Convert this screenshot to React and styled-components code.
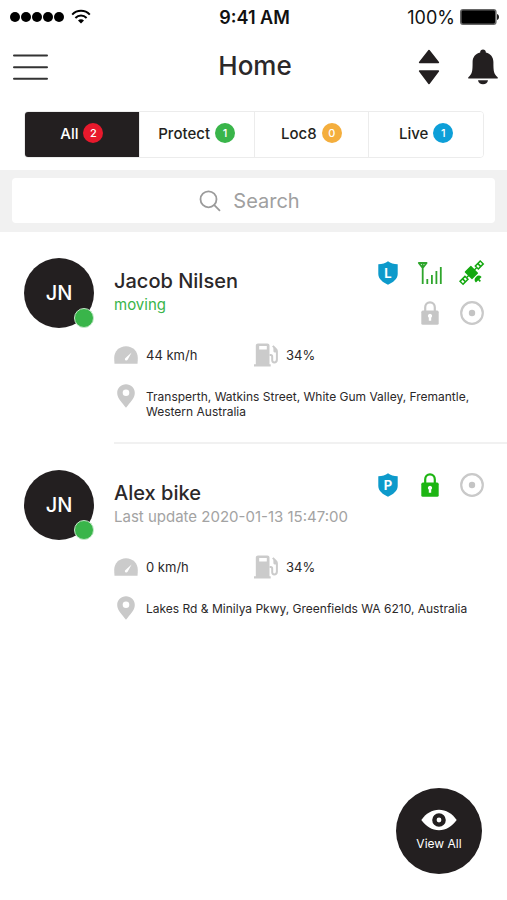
import React, { useState } from "react";
import styled, { createGlobalStyle } from "styled-components";

const tabs = [
    { id: "all", label: "All", count: 2, color: "#e8192c" },
    { id: "protect", label: "Protect", count: 1, color: "#39b54a" },
    { id: "loc8", label: "Loc8", count: 0, color: "#f4ae3d" },
    { id: "live", label: "Live", count: 1, color: "#0d9fd8" },
];

const devices = [
    {
        name: "Jacob Nilsen",
        initials: "JN",
        status: "moving",
        moving: true,
        plan: "L",
        tracking: true,
        locked: false,
        speed: "44 km/h",
        fuel: "34%",
        address: "Transperth, Watkins Street, White Gum Valley, Fremantle, Western Australia",
    },
    {
        name: "Alex bike",
        initials: "JN",
        status: "Last update 2020-01-13 15:47:00",
        moving: false,
        plan: "P",
        tracking: false,
        locked: true,
        speed: "0 km/h",
        fuel: "34%",
        address: "Lakes Rd & Minilya Pkwy, Greenfields WA 6210, Australia",
    },
];

const WifiIcon = () => (
    <svg width="20" height="16" viewBox="0 0 20 16" fill="none" stroke="#000" strokeWidth="2" aria-hidden="true">
        <path d="M1.2 5.6C6 .6 14 .6 18.8 5.6" />
        <path d="M4.4 9C7.6 5.8 12.4 5.8 15.6 9" />
        <path d="M7 11.6c1.7-1.7 4.3-1.7 6 0l-3 3z" fill="#000" stroke="none" />
    </svg>
);

const BatteryIcon = () => (
    <svg width="39" height="16" viewBox="0 0 39 16" aria-hidden="true">
        <rect x=".8" y=".8" width="35" height="14.400" rx="2.2" fill="#000" stroke="#666" strokeWidth="1.600" />
        <path d="M37 5c1.500.5 2 1.600 2 3s-.5 2.500-2 3z" fill="#222" />
    </svg>
);

const MenuIcon = () => (
    <svg width="36" height="28" viewBox="0 0 36 28" stroke="#333" strokeWidth="2" strokeLinecap="round" aria-hidden="true">
        <path d="M2 2.500h33M2 14.200h33M2 25.800h33" />
    </svg>
);

const SortIcon = () => (
    <svg width="22" height="36" viewBox="0 0 22 36" fill="#231f20" stroke="#231f20" strokeWidth="1.500" strokeLinejoin="round" aria-hidden="true">
        <path d="M11 1.500 20.400 13.500H1.600zM11 34.500 20.400 22H1.600z" />
    </svg>
);

const BellIcon = () => (
    <svg width="30" height="36" viewBox="0 0 30 36" fill="#231f20" aria-hidden="true">
        <path d="M15 .4c-1.600 0-2.800 1.100-2.800 2.600v.6C7.500 4.700 4.600 8.300 4.600 13c0 9.500-.5 12-4.200 15.200-.5.5-.3 1.300.4 1.300h28.400c.7 0 .9-.8.4-1.300C25.900 25 25.400 22.500 25.400 13c0-4.700-2.900-8.300-7.600-9.400V3C17.800 1.500 16.600.4 15 .4z" />
        <path d="M10 31.200h10c-.4 2.400-2.300 4-5 4s-4.600-1.600-5-4z" />
    </svg>
);

const SearchIcon = () => (
    <svg width="22" height="22" viewBox="0 0 22 22" fill="none" stroke="#9b9b9b" strokeWidth="1.800" strokeLinecap="round" aria-hidden="true">
        <circle cx="9.500" cy="9.300" r="8" />
        <path d="m15.300 15.200 5.200 5.200" />
    </svg>
);

const ShieldIcon = () => (
    <svg width="20" height="24" viewBox="0 0 20 24" fill="#0d9acb" aria-hidden="true">
        <path d="M10 .3C7.600 2.300 4.200 3.200.3 3.300V13c0 4.800 4.700 8.600 9.700 10.700 5-2.100 9.700-5.900 9.700-10.700V3.300C15.800 3.200 12.400 2.300 10 .3z" />
    </svg>
);

const SignalIcon = () => (
    <svg width="24" height="24" viewBox="0 0 24 24" fill="none" stroke="#2ea52c" strokeWidth="1.800" aria-hidden="true">
        <path d="M4.700 23V2M.8 2h7.800L4.700 7z" strokeLinejoin="round" />
        <path d="M9.300 23v-5M13.900 23v-9M18.400 23V10M22.800 23V6" />
    </svg>
);

const SatelliteIcon = () => (
    <svg width="24" height="24" viewBox="0 0 24 24" fill="#14a810" aria-hidden="true">
        <g transform="rotate(-45 12 12)">
            <rect x="7.400" y="6" width="9" height="10.600" rx=".6" />
            <path d="M5 10.800h14v1.400H5z" />
            <path fillRule="evenodd" d="M-3 8.600h8.400v5.800H-3zM-1.600 10.200v2.600H.4v-2.600zM2 10.200v2.600h2v-2.600z" />
            <path fillRule="evenodd" d="M18.600 8.600H27v5.800h-8.400zM20 10.200v2.600h2v-2.600zM23.600 10.200v2.600h2v-2.600z" />
            <path d="M8 21.600a4 4 0 0 1 8 0z" />
            <path d="M11.200 21h1.600v2.800h-1.600z" />
        </g>
    </svg>
);

const LockIcon = ({ color }) => (
    <svg width="18" height="24" viewBox="0 0 18 24" aria-hidden="true">
        <path d="M4.200 10.500V6.300C4.200 3.400 6.200 1.400 9 1.400s4.800 2 4.800 4.900v4.200" fill="none" stroke={color} strokeWidth="2.200" />
        <rect x=".3" y="9.600" width="17.400" height="14.200" rx="1.600" fill={color} />
        <path d="M9 12.800a2.200 2.200 0 0 0-1.200 4v3h2.400v-3a2.200 2.200 0 0 0-1.200-4z" fill="#fff" />
    </svg>
);

const TargetIcon = () => (
    <svg width="24" height="24" viewBox="0 0 24 24" aria-hidden="true">
        <circle cx="12" cy="12" r="10.800" fill="none" stroke="#c9c9c9" strokeWidth="2.200" />
        <circle cx="12" cy="12" r="3.200" fill="#c4c4c4" />
    </svg>
);

const SpeedIcon = () => (
    <svg width="24" height="18" viewBox="0 0 24 18" aria-hidden="true">
        <path d="M12 .3C5.300.3.200 5.400.200 11.800c0 2 .1 3.900.3 5.900h23c.2-2 .3-3.900.3-5.900C23.800 5.400 18.700.3 12 .3z" fill="#cbcbcb" />
        <path d="m17.600 6.600-4 7.200c-.5.900-1.500 1-2.200.4-.7-.7-.7-1.700.1-2.300z" fill="#fff" />
    </svg>
);

const FuelIcon = () => (
    <svg width="24" height="24" viewBox="0 0 24 24" aria-hidden="true">
        <path fillRule="evenodd" d="M1.800 2.500C1.800 1.200 2.800.4 4 .4h9.300c1.300 0 2.200.9 2.200 2.100v18.700h1.200v2.400H0v-2.400h1.800zM5.200 3v3.600h7.600V3z" fill="#cbcbcb" />
        <path d="M15.500 12h1.200c1 0 1.500.7 1.500 1.700v3.600c0 1.300.8 2.100 2 2.100 1.500 0 2.600-1 2.700-2.800V8.500c0-1-.3-1.700-.9-2.300l-3.200-3.300" fill="none" stroke="#cbcbcb" strokeWidth="2" />
        <path d="M19.400 4.600v3.300c0 1 .9 1.700 2 1.700h1.500V6.500z" fill="#cbcbcb" />
    </svg>
);

const PinIcon = () => (
    <svg width="18" height="24" viewBox="0 0 18 24" aria-hidden="true">
        <path d="M9 .3C4.100.3.200 4.100.200 8.900.2 14.600 5.200 18.400 9 23.700c3.800-5.300 8.800-9.100 8.800-14.800C17.800 4.100 13.900.3 9 .3z" fill="#c9c9c9" />
        <circle cx="9" cy="8.800" r="3.300" fill="#fff" />
    </svg>
);

const EyeIcon = () => (
    <svg width="36" height="22" viewBox="0 0 36 22" aria-hidden="true">
        <path d="M.3 11C5 4.500 11 .8 18 .8S31 4.500 35.700 11C31 17.500 25 21.200 18 21.200S5 17.500.3 11z" fill="#fff" />
        <circle cx="18" cy="11" r="4.600" fill="none" stroke="#231f20" strokeWidth="4.400" />
    </svg>
);

const Device = ({ device }) => (
    <Item>
        <Avatar>
            {device.initials}
            <Presence />
        </Avatar>
        <Body>
            <Head>
                <Identity>
                    <Name>{device.name}</Name>
                    <Status $moving={device.moving}>{device.status}</Status>
                </Identity>
                <Indicators>
                    <Plan>
                        <ShieldIcon />
                        <PlanLetter>{device.plan}</PlanLetter>
                    </Plan>
                    {device.tracking && (
                        <>
                            <SignalIcon />
                            <SatelliteIcon />
                            <span />
                        </>
                    )}
                    <LockIcon color={device.locked ? "#1db513" : "#c6c6c6"} />
                    <TargetIcon />
                </Indicators>
            </Head>
            <Metrics>
                <Detail>
                    <SpeedIcon />
                    {device.speed}
                </Detail>
                <Detail>
                    <FuelIcon />
                    {device.fuel}
                </Detail>
            </Metrics>
            <Place>
                <PinIcon />
                <Address>{device.address}</Address>
            </Place>
        </Body>
    </Item>
);

const App = () => {
    const [active, setActive] = useState("all");
    const [query, setQuery] = useState("");

    return (
        <Page>
            <GlobalStyle />
            <StatusBar>
                <Carrier>
                    <Dots>
                        <Dot />
                        <Dot />
                        <Dot />
                        <Dot />
                        <Dot />
                    </Dots>
                    <WifiIcon />
                </Carrier>
                <Clock>9:41 AM</Clock>
                <Battery>
                    100%
                    <BatteryIcon />
                </Battery>
            </StatusBar>
            <Header>
                <IconButton aria-label="Menu">
                    <MenuIcon />
                </IconButton>
                <Title>Home</Title>
                <Actions>
                    <IconButton aria-label="Sort">
                        <SortIcon />
                    </IconButton>
                    <IconButton aria-label="Notifications">
                        <BellIcon />
                    </IconButton>
                </Actions>
            </Header>
            <Tabs>
                {tabs.map((tab) => (
                    <Tab
                        key={tab.id}
                        aria-pressed={active === tab.id}
                        $active={active === tab.id}
                        onClick={() => setActive(tab.id)}
                    >
                        {tab.label}
                        <Count $color={tab.color}>{tab.count}</Count>
                    </Tab>
                ))}
            </Tabs>
            <SearchBar>
                <SearchBox>
                    <SearchIcon />
                    <SearchInput
                        aria-label="Search"
                        placeholder="Search"
                        value={query}
                        onChange={(e) => setQuery(e.target.value)}
                    />
                </SearchBox>
            </SearchBar>
            <List>
                {devices.map((device) => (
                    <Device key={device.name} device={device} />
                ))}
            </List>
            <ViewAll>
                <EyeIcon />
                View All
            </ViewAll>
        </Page>
    );
};

export default App;

const GlobalStyle = createGlobalStyle`
    * {
        box-sizing: border-box;
    }

    body {
        margin: 0;
        background: #fff;
        color: #2b2829;
        font-family: Inter, "Liberation Sans", sans-serif;
    }

    button, input {
        font-family: inherit;
        color: inherit;
    }

    svg {
        display: block;
        flex-shrink: 0;
        overflow: visible;
    }
`;

const Page = styled.div`
    min-height: 100vh;
`;

const StatusBar = styled.div`
    display: grid;
    grid-template-columns: 1fr auto 1fr;
    align-items: center;
    height: 34px;
    padding: 0 8px 0 10px;
    color: #111;
    font-size: 18px;
`;

const Carrier = styled.div`
    display: flex;
    align-items: center;
    gap: 7px;
`;

const Dots = styled.div`
    display: flex;
    gap: 1px;
`;

const Dot = styled.span`
    width: 10px;
    height: 10px;
    border-radius: 50%;
    background: #000;
`;

const Clock = styled.div`
    font-weight: 600;
`;

const Battery = styled.div`
    display: flex;
    align-items: center;
    justify-content: flex-end;
    gap: 5px;
`;

const Header = styled.header`
    display: grid;
    grid-template-columns: 1fr auto 1fr;
    align-items: center;
    height: 66px;
    padding: 0 9px 0 12px;
`;

const IconButton = styled.button`
    display: flex;
    justify-self: start;
    padding: 0;
    border: 0;
    background: none;
    cursor: pointer;
`;

const Title = styled.h1`
    margin: 0;
    padding-bottom: 3px;
    font-size: 26px;
    font-weight: 500;
`;

const Actions = styled.div`
    display: flex;
    justify-content: flex-end;
    gap: 28px;
`;

const Tabs = styled.nav`
    display: flex;
    height: 47px;
    margin: 11px 23px 12px 24px;
    border: 1px solid #ececec;
    border-radius: 4px;
    overflow: hidden;
`;

const Tab = styled.button`
    display: flex;
    flex: 1;
    align-items: center;
    justify-content: center;
    gap: 5px;
    padding: 0 0 3px;
    border: 0;
    border-left: 1px solid #ececec;
    background: ${({ $active }) => ($active ? "#231f20" : "#fff")};
    color: ${({ $active }) => ($active ? "#fff" : "#231f20")};
    font-size: 15px;
    font-weight: 500;
    cursor: pointer;

    &:first-child {
        border-left: 0;
    }
`;

const Count = styled.span`
    width: 20px;
    border-radius: 50%;
    background: ${({ $color }) => $color};
    color: #fff;
    font-size: 11px;
    line-height: 20px;
    text-align: center;
`;

const SearchBar = styled.div`
    padding: 8px 12px 9px;
    background: #f1f1f1;
`;

const SearchBox = styled.label`
    display: flex;
    align-items: center;
    justify-content: center;
    gap: 12px;
    height: 45px;
    padding-right: 8px;
    border-radius: 4px;
    background: #fff;
`;

const SearchInput = styled.input`
    field-sizing: content;
    max-width: 75%;
    padding: 0;
    border: 0;
    outline: 0;
    background: none;
    font-size: 20px;

    &::placeholder {
        color: #a0a0a0;
        opacity: 1;
    }
`;

const List = styled.ul`
    margin: 0;
    padding: 0;
    list-style: none;
`;

const Item = styled.li`
    display: flex;
    gap: 20px;
    padding: 26px 0 0 24px;
`;

const Avatar = styled.div`
    position: relative;
    display: flex;
    flex-shrink: 0;
    align-items: center;
    justify-content: center;
    width: 70px;
    height: 70px;
    border-radius: 50%;
    background: #231f20;
    color: #fff;
    font-size: 20px;
    font-weight: 500;
`;

const Presence = styled.span`
    position: absolute;
    right: 0;
    bottom: 0;
    width: 20px;
    height: 20px;
    border: 1px solid #c4e8c9;
    border-radius: 50%;
    background: #39b54a;
`;

const Body = styled.div`
    flex: 1;
    padding: 0 23px 23px 0;

    ${Item}:not(:last-child) & {
        border-bottom: 2px solid #f1f1f1;
    }
`;

const Head = styled.div`
    display: flex;
    justify-content: space-between;
    min-height: 85px;
`;

const Identity = styled.div`
    padding-top: 10px;
`;

const Name = styled.h2`
    margin: 0;
    font-size: 20px;
    font-weight: 500;
    line-height: 27px;
`;

const Status = styled.p`
    margin: 0;
    color: ${({ $moving }) => ($moving ? "#39b54a" : "#a3a3a3")};
    font-size: 15px;
    line-height: 20px;
`;

const Indicators = styled.div`
    display: grid;
    grid-template-columns: repeat(3, 24px);
    grid-auto-rows: 24px;
    gap: 16px 18px;
    align-content: start;
    justify-items: center;
    padding-top: 3px;
`;

const Plan = styled.span`
    display: grid;
    place-items: center;

    > * {
        grid-area: 1 / 1;
    }
`;

const PlanLetter = styled.span`
    color: #fff;
    font-size: 13px;
    font-weight: 700;
    line-height: 24px;
`;

const Metrics = styled.div`
    display: grid;
    grid-template-columns: 140px 1fr;
    height: 24px;
`;

const Detail = styled.div`
    display: flex;
    align-items: center;
    gap: 8px;
    font-size: 13px;
`;

const Place = styled.div`
    display: flex;
    gap: 11px;
    padding: 17px 0 0 3px;
`;

const Address = styled.p`
    margin: 0;
    padding-top: 5px;
    font-size: 12px;
    line-height: 15px;
`;

const ViewAll = styled.button`
    position: fixed;
    right: 25px;
    bottom: 26px;
    display: flex;
    flex-direction: column;
    align-items: center;
    justify-content: center;
    gap: 5px;
    width: 86px;
    height: 86px;
    padding: 0 0 3px;
    border: 0;
    border-radius: 50%;
    background: #231f20;
    color: #fff;
    font-size: 12px;
    cursor: pointer;
`;
